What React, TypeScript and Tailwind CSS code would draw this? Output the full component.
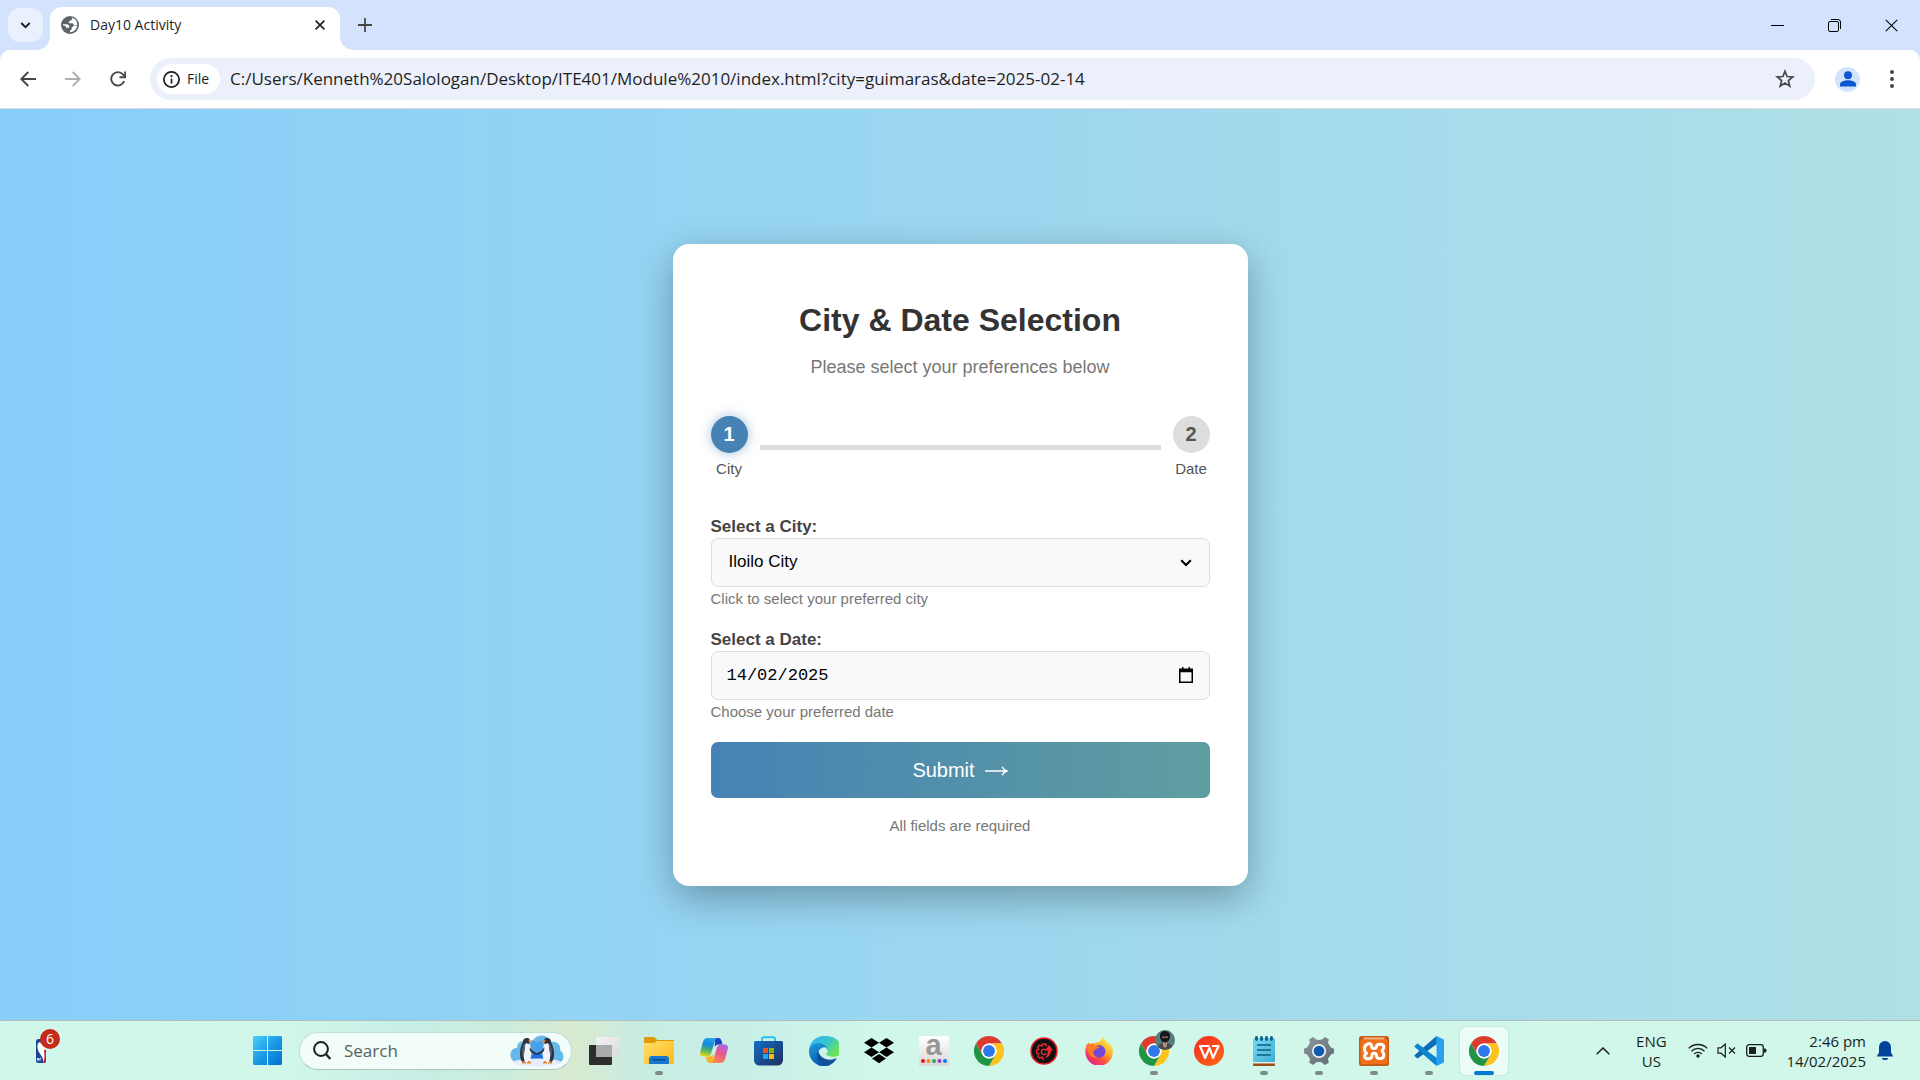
import React, { useId, useState } from "react";

type IconProps = { className?: string };

/* ---------- browser icons ---------- */

const GlobeIcon = () => (
  <svg viewBox="0 0 18 18" className="h-[18px] w-[18px] shrink-0" aria-hidden="true">
    <circle cx="9" cy="9" r="9" fill="#5f6368" />
    <path d="M11 1.800c.4 1.300-.2 2.200-1.300 2.500-.5.900-1.100 1.300-2 1.500-.1.900.2 1.400 1.100 1.500h2.400c1 .1 1.500.7 1.600 1.700h3.500A7.200 7.200 0 0 0 11 1.800z" fill="#fff" />
    <path d="M16.200 9.500h-3.700c-.2 1-.7 1.500-1.700 1.600v1.700c-.1.900-.7 1.400-1.700 1.500v1.900a7.200 7.200 0 0 0 7.100-6.700z" fill="#fff" />
    <path d="M1.900 8.200h3.900c1.500.1 2.300.9 2.400 2.300v1.200H6.500c-1.300-.1-1.900-.7-2-1.800L1.800 9.300z" fill="#fff" />
  </svg>
);

const stroke = {
  fill: "none",
  stroke: "currentColor",
  strokeLinecap: "butt" as const,
  strokeLinejoin: "miter" as const,
};

const ChevronIcon = ({ className = "" }: IconProps) => (
  <svg viewBox="0 0 12 8" className={className} aria-hidden="true">
    <path d="M1.200 1.200 6 6l4.800-4.800" {...stroke} strokeWidth="2.200" />
  </svg>
);

const CrossIcon = ({ className = "", weight = 2 }: IconProps & { weight?: number }) => (
  <svg viewBox="0 0 12 12" className={className} aria-hidden="true">
    <path d="m.7.7 10.600 10.600M11.300.7.7 11.300" {...stroke} strokeWidth={weight} />
  </svg>
);

const PlusIcon = () => (
  <svg viewBox="0 0 14 14" className="h-[14px] w-[14px]" aria-hidden="true">
    <path d="M7 0v14M0 7h14" {...stroke} strokeWidth="1.800" />
  </svg>
);

const ArrowIcon = ({ className = "" }: IconProps) => (
  <svg viewBox="0 0 16 16" className={className} aria-hidden="true">
    <path d="M16 8H1.500M8.300 1 1.300 8l7 7" {...stroke} strokeWidth="1.900" />
  </svg>
);

const ReloadIcon = () => (
  <svg viewBox="0 0 16 16" className="h-4 w-4" aria-hidden="true">
    <path d="M14.200 10.200A6.700 6.700 0 1 1 13 3.500l1.300 1.400" {...stroke} strokeWidth="1.900" />
    <path d="M15.200.5v5.700H9.500" {...stroke} strokeWidth="1.900" />
  </svg>
);

const InfoIcon = () => (
  <svg viewBox="0 0 17 17" className="h-[17px] w-[17px]" aria-hidden="true">
    <circle cx="8.500" cy="8.500" r="7.600" {...stroke} strokeWidth="1.700" />
    <path d="M8.500 7.600v5" {...stroke} strokeWidth="1.700" />
    <circle cx="8.500" cy="5.200" r="1.100" fill="currentColor" />
  </svg>
);

const StarIcon = () => (
  <svg viewBox="0 0 20 20" className="h-5 w-5" aria-hidden="true">
    <path
      d="m10 2.200 2.100 5.300 5.700.4-4.400 3.700 1.400 5.600-4.800-3.100-4.800 3.100 1.400-5.600L2.200 7.900l5.700-.4z"
      {...stroke}
      strokeWidth="1.700"
    />
  </svg>
);

/* ---------- taskbar icons ---------- */

const BasketballBadge = () => (
  <svg viewBox="0 0 26 36" className="h-9 w-[26px]" aria-hidden="true">
    <rect x="1" y="10" width="10" height="24" rx="2.500" fill="#1b4594" />
    <path d="M6 10h3a2.500 2.500 0 0 1 2 2v20a2.500 2.500 0 0 1-2 2z" fill="#c8203c" />
    <path d="M3.200 14c1.500-1.500 3.300-.6 3.600 1 1.500.3 2.600 1.500 3.200 3l1-1v3.500L9 21l.5 6-.8 7C8.300 29 6.500 27 4.500 24 2 20 2 16 3.200 14z" fill="#fff" />
    <path d="M2.500 31.500V29l1.500 2.500V29m1.200 2.500v-2.300h1" fill="none" stroke="#fff" strokeWidth=".8" />
  </svg>
);

const StartIcon = () => {
  const id = useId();
  return (
    <svg viewBox="0 0 29 29" className="h-[29px] w-[29px]" aria-hidden="true">
      <defs>
        <linearGradient id={id} gradientUnits="userSpaceOnUse" x1="0" y1="0" x2="29" y2="29">
          <stop offset="0" stopColor="#4cd0fb" />
          <stop offset=".5" stopColor="#1a9ae6" />
          <stop offset="1" stopColor="#0070d0" />
        </linearGradient>
      </defs>
      <path d="M1 0h13v14H0V1zM15 0h13l1 1v13H15zM0 15h14v14H1l-1-1zM15 15h14v13l-1 1H15z" fill={`url(#${id})`} />
    </svg>
  );
};

const SearchIcon = () => (
  <svg viewBox="0 0 18 19" className="h-[19px] w-[18px]" aria-hidden="true">
    <circle cx="8" cy="8" r="6.900" {...stroke} strokeWidth="2" />
    <path d="m12.800 12.900 4.500 5" {...stroke} strokeWidth="2.200" />
  </svg>
);

const Penguin = () => (
  <g>
    <path d="M17 3c-2.800 0-4.300 2-4.200 4.600C11.500 10 10 14 10 19c0 4 .8 6.700 2.500 8h5c2-3 3-7 2.300-12-.4-2.500-.8-4-.6-6C20.500 5.500 20 3 17 3z" fill="#2a3442" />
    <path d="M16 8c1.300.8 2.500.8 3.300.5 2.700 6 3.200 12.500-.8 18.500h-3.500c-2-5-2-13 1-19z" fill="#f1f3f6" />
    <path d="M14 8.500c-1.500 3-2.300 8-1.500 13 2-3 3-8 2.500-12z" fill="#55606e" />
    <path d="M18.500 5 23.500 6l-4.500 1.200z" fill="#f08236" />
    <path d="M19.800 12c1.300 3 3.200 4.800 7.200 6.300v1.400c-3.500-.4-6-1.800-7.200-4.700z" fill="#27313f" />
    <path d="m12 28 2-2 2 2zM17 28l2-2 2 2z" fill="#f08236" stroke="#f08236" />
  </g>
);

const PenguinsIcon = () => (
  <svg viewBox="0 0 54 32" className="h-8 w-[54px]" aria-hidden="true">
    <path d="M8 28C2 27-1 22 1 17c1-3 3-4 6-4 0-5 4-8 9-7 4 1 6 0 8-2 5-6 15-4 17 3 6-1 10 3 9 8 5 4 5 12-3 13z" fill="#67b8e8" />
    <path d="M21 22V10c0-4 3-6 6-2 3-4 6-2 6 2v12z" fill="#4aa0e6" />
    <path d="M21 24c0-4 3-6 6-6s6 2 6 6z" fill="#1f72dc" />
    <ellipse cx="27" cy="27.500" rx="24" ry="4" fill="#e4edf8" />
    <Penguin />
    <g transform="translate(54 0) scale(-1 1)">
      <Penguin />
    </g>
  </svg>
);

const TaskViewIcon = () => {
  const id = useId();
  return (
    <svg viewBox="0 0 30 28" className="h-7 w-[30px]" aria-hidden="true">
      <defs>
        <linearGradient id={id} x1="0" y1="0" x2="1" y2="1">
          <stop offset="0" stopColor="#f4f4f4" />
          <stop offset="1" stopColor="#dadada" />
        </linearGradient>
      </defs>
      <rect x="0" y="8" width="23" height="20" rx="1" fill="#2d2d2d" />
      <rect x="7" y="0" width="23" height="20" rx="1" fill={`url(#${id})`} />
      <path d="M7 8h16v12H8l-1-1z" fill="#a9abaa" />
    </svg>
  );
};

const ExplorerIcon = () => {
  const id = useId();
  return (
    <svg viewBox="0 0 30 27" className="h-[27px] w-[30px]" aria-hidden="true">
      <defs>
        <linearGradient id={id} x1="0" y1="0" x2="1" y2="1">
          <stop offset="0" stopColor="#ffdf6b" />
          <stop offset="1" stopColor="#fbb917" />
        </linearGradient>
      </defs>
      <path d="M0 1.500C0 .6.600 0 1.500 0H9.500c.7 0 1 .2 1.500.7L13.200 3H29c.6 0 1 .4 1 1v4H0z" fill="#dd9b06" />
      <path d="M0 6h9.500c.8 0 1.300-.2 1.900-.8L12.500 4H30v22a1 1 0 0 1-1 1H1a1 1 0 0 1-1-1z" fill={`url(#${id})`} />
      <path d="M5 27v-5a3 3 0 0 1 3-3h14a3 3 0 0 1 3 3v5z" fill="#1677cd" />
      <path d="M9 22.800h12" stroke="#0b4c8f" strokeWidth="1.400" strokeLinecap="round" />
    </svg>
  );
};

const CopilotIcon = () => {
  const id = useId();
  return (
    <svg viewBox="0 0 28 26" className="h-[26px] w-7" aria-hidden="true">
      <defs>
        <linearGradient id={id + "a"} x1=".5" y1="0" x2=".3" y2="1">
          <stop offset="0" stopColor="#1fa5e8" />
          <stop offset=".35" stopColor="#1587dc" />
          <stop offset=".7" stopColor="#5cb860" />
          <stop offset="1" stopColor="#f2d40c" />
        </linearGradient>
        <linearGradient id={id + "b"} x1=".8" y1="0" x2=".3" y2="1">
          <stop offset="0" stopColor="#a868f0" />
          <stop offset=".45" stopColor="#e7578f" />
          <stop offset="1" stopColor="#ff8a4a" />
        </linearGradient>
      </defs>
      <path d="M15 0h3.500c1.700 0 2.500 1.200 3 3l1 3.500h-4c-2 0-3.200 1-3.800 3z" fill="#1b45c0" />
      <path d="M13 25H9.500c-1.500 0-2.400-1-2.900-3l-1-3.500h4c2 0 3.200-1 3.800-3z" fill="#f4b32c" />
      <path d="M7.500 0H17c-1.500.8-2 2-2.500 3.800L11.200 15c-.6 2.200-1.800 3.500-4 3.500H3c-2.300 0-3.400-1.800-2.800-4.400L3 4C3.800 1.300 5.200 0 7.500 0z" fill={`url(#${id}a)`} />
      <path d="M20.500 25H11c1.500-.8 2-2 2.500-3.800L16.800 10c.6-2.200 1.800-3.500 4-3.500H25c2.300 0 3.400 1.800 2.800 4.400L25 21c-.8 2.700-2.200 4-4.500 4z" fill={`url(#${id}b)`} />
    </svg>
  );
};

const StoreIcon = () => {
  const id = useId();
  return (
    <svg viewBox="0 0 29 30" className="h-[30px] w-[29px]" aria-hidden="true">
      <defs>
        <linearGradient id={id} x1="0" y1="0" x2="1" y2="1">
          <stop offset="0" stopColor="#0f6fc6" />
          <stop offset="1" stopColor="#1f2d5c" />
        </linearGradient>
      </defs>
      <path d="M8 7V3a1.800 1.800 0 0 1 1.800-1.800h9.400A1.800 1.800 0 0 1 21 3v4" fill="none" stroke="#2cc0f2" strokeWidth="2" />
      <path d="M1.500 5h26A1.500 1.500 0 0 1 29 6.500V24a5.500 5.500 0 0 1-5.500 5.500h-18A5.500 5.500 0 0 1 0 24V6.500A1.500 1.500 0 0 1 1.500 5z" fill={`url(#${id})`} />
      <path d="M9 12h5v5H9z" fill="#f1511b" />
      <path d="M15 12h5v5h-5z" fill="#80bc06" />
      <path d="M9 18h5v5H9z" fill="#22a7ee" />
      <path d="M15 18h5v5h-5z" fill="#fbbc09" />
    </svg>
  );
};

const EdgeIcon = () => {
  const id = useId();
  return (
    <svg viewBox="0 0 256 256" className="h-[30px] w-[30px]" aria-hidden="true">
      <defs>
        <linearGradient id={id + "a"} x1=".2" y1="0" x2="1" y2=".5">
          <stop offset="0" stopColor="#35b5ee" />
          <stop offset=".5" stopColor="#36c6c9" />
          <stop offset="1" stopColor="#6ce25a" />
        </linearGradient>
        <linearGradient id={id + "b"} x1="0" y1="0" x2=".4" y2="1">
          <stop offset="0" stopColor="#1c9fe0" />
          <stop offset="1" stopColor="#0c5cae" />
        </linearGradient>
      </defs>
      <path d="M231 190c-4 2-8 4-12 5-13 5-26 7-40 7-53 0-99-36-99-83 0-13 7-25 18-31-48 2-60 52-60 81 0 82 76 91 92 91 9 0 23-3 31-5 30-11 56-32 73-59 1-4-1-7-3-6z" fill="#124f9c" />
      <path d="M106 241a79 79 0 0 1-23-21 81 81 0 0 1 30-120c3-1 8-4 15-4 10 0 19 5 25 13 4 5 6 12 6 18 0 0 27-80-65-80-57 0-94 42-94 81a128 128 0 0 0 12 56 128 128 0 0 0 156 66 75 75 0 0 1-62-9z" fill={`url(#${id}b)`} />
      <path d="M152 149c-1 1-3 2-3 7 0 3 2 7 6 10 21 15 61 13 61 13 16 0 31-4 44-12a89 89 0 0 0-4-120C232 14 190 0 128 0 57 0 1 57 0 128c1-36 36-65 80-65 4 0 24 0 43 10 17 9 26 19 32 30 6 11 8 25 8 31s-3 14-11 15z" fill={`url(#${id}a)`} transform="scale(.985)" />
    </svg>
  );
};

const DropboxIcon = () => (
  <svg viewBox="0 0 30 26" className="h-[26px] w-[30px]" aria-hidden="true">
    <path d="m7.500 0 7.500 4.800-7.500 4.700L0 4.800zM22.500 0 30 4.800l-7.500 4.700L15 4.800zM7.500 9.500l7.500 4.800L7.500 19 0 14.300zM22.500 9.500l7.500 4.800-7.500 4.700-7.500-4.700zM15 16l7 4.600-7 4.700-7-4.700z" />
  </svg>
);

const LetterTileIcon = () => (
  <span className="flex h-[30px] w-[30px] flex-col items-center justify-between bg-gradient-to-b from-white to-[#d8d8d8] pb-[3px]">
    <span className="h-[22px] font-['Liberation_Sans',sans-serif] text-[29px] leading-[18px] font-bold text-[#969696]">a</span>
    <svg viewBox="0 0 28 4" className="h-1 w-7" aria-hidden="true">
      <circle cx="3" cy="2" r="2" fill="#e81123" />
      <circle cx="8.500" cy="2" r="2" fill="#f09020" />
      <circle cx="14" cy="2" r="2" fill="#27a85a" />
      <circle cx="19.500" cy="2" r="2" fill="#8a3fd1" />
      <circle cx="25" cy="2" r="2" fill="#0a7bdc" />
    </svg>
  </span>
);

const ChromeIcon = () => (
  <svg viewBox="0 0 48 48" className="h-[30px] w-[30px]" aria-hidden="true">
    <circle cx="24" cy="24" r="23" fill="#fff" />
    <path d="M3.215 12A24 24 0 0 1 44.785 12H24a12 12 0 0 0-10.390 18z" fill="#dd3b30" />
    <path d="M44.785 12A24 24 0 0 1 24 48l10.390-18A12 12 0 0 0 24 12z" fill="#fcc31e" />
    <path d="M24 48A24 24 0 0 1 3.215 12l10.395 18a12 12 0 0 0 20.780 0z" fill="#219547" />
    <circle cx="24" cy="24" r="12" fill="#fff" />
    <circle cx="24" cy="24" r="9.500" fill="#2f78ec" />
  </svg>
);

const GearBoltIcon = () => (
  <svg viewBox="0 0 28 28" className="h-7 w-7" aria-hidden="true">
    <circle cx="14" cy="14" r="13" fill="#101214" stroke="#ee1f2a" strokeWidth="1.600" />
    <path d="M16.500 9.500 15.800 7h-3.200L12 9.200l-2.300-1.100-2.100 2.100 1.200 2.200-2.300.7v3l2.300.6-1.100 2.300 2.200 2.100 2.200-1.200.6 2.100h1.500" {...stroke} stroke="#f02a30" strokeWidth="1.300" />
    <path d="M16 13a2.700 2.700 0 1 0 .2 3.400" {...stroke} stroke="#f02a30" strokeWidth="1.300" />
    <path d="m19 8 4.200 5.500h-2.300c0 4-2.200 6.800-5.700 7.500 2-2 2.600-4.200 2.500-7.500H15z" fill="#f02a30" />
  </svg>
);

const FirefoxIcon = () => {
  const id = useId();
  return (
    <svg viewBox="0 0 28 28" className="h-7 w-7" aria-hidden="true">
      <defs>
        <linearGradient id={id} x1=".9" y1=".1" x2=".2" y2="1">
          <stop offset="0" stopColor="#fff04a" />
          <stop offset=".35" stopColor="#ffb02a" />
          <stop offset=".65" stopColor="#ff4f3c" />
          <stop offset="1" stopColor="#e0189c" />
        </linearGradient>
      </defs>
      <path d="M18 0c1 2.500 3.200 3.600 4.600 5.400.6.800 1 1.500 1.200 2.200.5-.3.600-1 .5-1.700 2.500 2.500 3.700 6 3.500 9.500A13.700 13.700 0 0 1 .4 14.700C.3 11 1.500 7.500 4 5.200c0 .9.200 1.600.7 2.200C6 6 8 5.900 9.500 6.500 11 5.500 12.300 5 14 5c1.500-1.300 3-3 4-5z" fill={`url(#${id})`} />
      <circle cx="14.200" cy="14.400" r="6.300" fill="#7448d8" />
      <path d="M1.500 8c3-1.500 7-.7 9.500 1.200 1.700-.2 3.300.1 4.500 1-1.700.3-3 1.200-4.500 1.800-1.200.5-1.500 2-3 2.400.3 3 2 5.500 5 6C7 22 2 18 1.500 8z" fill="#ff7a22" />
    </svg>
  );
};

const PortraitBadge = () => (
  <svg viewBox="0 0 20 20" className="absolute -top-1.5 left-4 h-5 w-5" aria-hidden="true">
    <circle cx="10" cy="10" r="10" fill="#557f7c" />
    <path d="M3 17c1-3 3-4 7-4s6 1 7 4a10 10 0 0 1-14 0z" fill="#4a4a4e" />
    <path d="M8 11h4v5l-2 2-2-2z" fill="#b98e7c" />
    <path d="M5 7.500C4.500 3 7 1 10 1s5.500 2 5 6c-.5 3.500-2.500 5.500-5 5.500s-4.500-2-5-5z" fill="#19181a" />
    <path d="M7 6.500h6V8H7z" fill="#8d6a5c" />
  </svg>
);

const WpsIcon = () => {
  const id = useId();
  return (
    <svg viewBox="0 0 30 30" className="h-[30px] w-[30px]" aria-hidden="true">
      <defs>
        <linearGradient id={id} x1="0" y1="0" x2="1" y2="1">
          <stop offset="0" stopColor="#f52a22" />
          <stop offset="1" stopColor="#ff6a14" />
        </linearGradient>
      </defs>
      <circle cx="15" cy="15" r="15" fill={`url(#${id})`} />
      <path d="M15.500 10H6l5 12L15.500 12l3.500 10 5.500-12h-6.500" fill="none" stroke="#fff" strokeWidth="2.200" strokeLinejoin="round" />
    </svg>
  );
};

const NotepadIcon = () => {
  const id = useId();
  return (
    <svg viewBox="0 0 22 30" className="h-[30px] w-[22px]" aria-hidden="true">
      <defs>
        <linearGradient id={id} x1="0" y1="0" x2="1" y2="1">
          <stop offset="0" stopColor="#7bd9f2" />
          <stop offset="1" stopColor="#3fafd4" />
        </linearGradient>
      </defs>
      <path d="M0 26h22v3a1 1 0 0 1-1 1H1a1 1 0 0 1-1-1z" fill="#964f14" />
      <path d="M0 25h22v2.500H0z" fill="#e8e8e8" />
      <rect y="2" width="22" height="24" rx="1.500" fill={`url(#${id})`} />
      <path d="M4 9h14M4 14h14M4 19h14" stroke="#0d6084" strokeWidth="1.700" />
      <path d="M3.500 1.500v2M8.500 1.500v2M13.500 1.500v2M18.500 1.500v2" stroke="#0d6084" strokeWidth="2.800" strokeLinecap="round" />
    </svg>
  );
};

const SettingsIcon = () => {
  const id = useId();
  return (
    <svg viewBox="0 0 30 30" className="h-[30px] w-[30px]" aria-hidden="true">
      <defs>
        <linearGradient id={id} x1="0" y1="0" x2="1" y2="1">
          <stop offset="0" stopColor="#8d949c" />
          <stop offset="1" stopColor="#626a74" />
        </linearGradient>
      </defs>
      <path
        d="M9.200 1 12 3.600c2 .6 4 .6 6 0L20.800 1l4 2.300-.8 3.800c1 1.600 1.700 2.700 3 4.400l3 1.200v4.600l-3 1.200c-1.300 1.700-2 2.800-3 4.400l.8 3.800-4 2.300-2.800-2.600c-2-.6-4-.6-6 0L9.200 29l-4-2.300.8-3.800c-1-1.600-1.700-2.700-3-4.400l-3-1.200v-4.600l3-1.200c1.300-1.700 2-2.800 3-4.400l-.8-3.800z"
        fill={`url(#${id})`}
      />
      <circle cx="15" cy="15" r="7" fill="#f2f3f4" />
      <circle cx="15" cy="15" r="5.300" fill="#0d5cb2" />
    </svg>
  );
};

const XamppIcon = () => (
  <svg viewBox="0 0 30 30" className="h-[30px] w-[30px]" aria-hidden="true">
    <rect width="30" height="30" rx="2.500" fill="#c65c1a" />
    <rect x="1.500" y="3" width="27" height="25" rx="2" fill="#f0701c" />
    <path d="M4 1.200h22l-1.500 2.300h-19z" fill="#f0a878" />
    <path
      d="M8 8.500a2.500 2.500 0 0 1 4.500 1.800c0 1.500.5 2.200 2.500 2.200s2.500-.7 2.500-2.200c0-3 7.300-3 7.300.7 0 1.700-.8 2.700-1.800 3.700 1 1.200 1.800 2.300 1.800 4.300 0 4.700-7.300 4.700-7.300.8 0-1.800-.5-2.500-2.500-2.500s-2 .9-2 2.300c0 4.500-7.500 4-7.500.5 0-1.500.8-2 2-2.700-1.200-1.200-2-2.300-2-4.200 0-2.500 1-4.300 2.500-4.700z"
      fill="none"
      stroke="#fff"
      strokeWidth="3"
      strokeLinejoin="round"
    />
  </svg>
);

const VsCodeIcon = () => (
  <svg viewBox="0 0 30 30" className="h-[30px] w-[30px]" aria-hidden="true">
    <path d="M22.500 0 1 18.800c-.6.600-.6 1.200 0 1.800l1.800 1.500c.5.400 1 .4 1.500 0L24 7.500z" fill="#0b6db5" />
    <path d="M22.500 30 1 11.200c-.6-.6-.6-1.200 0-1.800l1.800-1.500c.5-.4 1-.4 1.500 0L24 22.500z" fill="#0d86cf" />
    <path d="M22.300 0 29 3.100c.6.3 1 .9 1 1.600v20.600c0 .7-.4 1.300-1 1.600L22.300 30z" fill="#27a0ee" />
    <path d="M22.300 8.500v13L13.500 15z" fill="#d2f6ea" />
  </svg>
);

const WifiIcon = () => (
  <svg viewBox="0 0 20 15" className="h-[15px] w-5" aria-hidden="true">
    <path d="M.7 5.400a13 13 0 0 1 18.600 0M3.500 8.200a9 9 0 0 1 13 0M6.200 11a5.300 5.300 0 0 1 7.600 0" {...stroke} strokeWidth="1.300" />
    <circle cx="10" cy="13" r="1.700" fill="currentColor" />
  </svg>
);

const MutedIcon = () => (
  <svg viewBox="0 0 20 15" className="h-[15px] w-5" aria-hidden="true">
    <path d="M1 4.800h3L8.300 1v13L4 10.200H1z" {...stroke} strokeWidth="1.200" />
    <path d="m12 4.500 6 6m0-6-6 6" {...stroke} strokeWidth="1.200" />
  </svg>
);

const BatteryIcon = () => (
  <svg viewBox="0 0 21 13" className="h-[13px] w-[21px]" aria-hidden="true">
    <rect x=".7" y=".7" width="16.600" height="11.600" rx="2.500" {...stroke} strokeWidth="1.300" />
    <rect x="3" y="3" width="7" height="7" rx=".5" fill="currentColor" />
    <path d="M18 4.500h1a1.500 1.500 0 0 1 1.500 1.500v1A1.500 1.500 0 0 1 19 8.500h-1z" fill="currentColor" />
  </svg>
);

const BellIcon = () => (
  <svg viewBox="0 0 16 19" className="h-[19px] w-4" aria-hidden="true">
    <path d="M8 0a6 6 0 0 1 6 6v5.500l2 3.500v.5H0V15l2-3.500V6a6 6 0 0 1 6-6zM5 17h6a3 2 0 0 1-6 0z" fill="#02429b" />
  </svg>
);

/* ---------- browser chrome ---------- */

const TabStrip = () => (
  <header className="flex h-[50px] items-center bg-[#d3e3fd] pl-2">
    <button type="button" aria-label="Search tabs" className="flex h-[34px] w-[35px] items-center justify-center rounded-xl bg-[#e9f1fe] text-[#1f1f1f]">
      <ChevronIcon className="h-[7px] w-[11px]" />
    </button>
    <div className="relative ml-[7px] flex h-[43px] w-[290px] items-center self-end rounded-t-xl bg-white pr-[15px] pb-[7px] pl-[11px]">
      <span className="absolute bottom-0 -left-3 h-3 w-3 bg-[radial-gradient(circle_at_0_0,transparent_11px,white_12px)]" />
      <span className="absolute -right-3 bottom-0 h-3 w-3 bg-[radial-gradient(circle_at_100%_0,transparent_11px,white_12px)]" />
      <GlobeIcon />
      <span className="ml-[11px] flex-1 text-sm text-[#1f1f1f]">Day10 Activity</span>
      <button type="button" aria-label="Close tab" className="text-[#1f1f1f]">
        <CrossIcon className="h-[10px] w-[10px]" />
      </button>
    </div>
    <button type="button" aria-label="New tab" className="ml-[18px] text-[#474747]">
      <PlusIcon />
    </button>
    <div className="ml-auto flex text-black">
      <button type="button" aria-label="Minimize" className="flex h-12 w-[57px] items-center justify-center">
        <span className="h-px w-[13px] bg-black" />
      </button>
      <button type="button" aria-label="Restore" className="flex h-12 w-[57px] items-center justify-center">
        <svg viewBox="0 0 13 13" className="h-[13px] w-[13px]" aria-hidden="true">
          <rect x=".5" y="2.500" width="10" height="10" rx="1.500" {...stroke} />
          <path d="M3 .5h7A2.500 2.500 0 0 1 12.500 3v7" {...stroke} />
        </svg>
      </button>
      <button type="button" aria-label="Close" className="flex h-12 w-[57px] items-center justify-center">
        <CrossIcon className="h-[13px] w-[13px]" weight={1} />
      </button>
    </div>
  </header>
);

const Toolbar = () => (
  <div className="bg-[#d3e3fd]">
    <nav className="flex h-[59px] items-center rounded-t-[10px] border-b border-[#d9dde3] bg-white pl-[5px]">
      <button type="button" aria-label="Back" className="flex w-[45px] justify-center text-[#474747]">
        <ArrowIcon className="h-4 w-4" />
      </button>
      <button type="button" aria-label="Forward" disabled className="flex w-[45px] justify-center text-[#b0b0b0]">
        <ArrowIcon className="h-4 w-4 rotate-180" />
      </button>
      <button type="button" aria-label="Reload" className="flex w-[45px] justify-center text-[#474747]">
        <ReloadIcon />
      </button>
      <div className="ml-[10px] flex h-[42px] flex-1 items-center rounded-full bg-[#ebf0fa] pr-5 pl-[7px]">
        <button type="button" className="flex h-[30px] w-[63px] items-center gap-[7px] rounded-full bg-white pl-[6px] text-sm text-[#1f1f1f]">
          <InfoIcon />
          File
        </button>
        <input
          aria-label="Address"
          readOnly
          value="C:/Users/Kenneth%20Salologan/Desktop/ITE401/Module%2010/index.html?city=guimaras&date=2025-02-14"
          className="ml-[10px] min-w-0 flex-1 bg-transparent text-[17px] text-[#1f1f1f] outline-none"
        />
        <button type="button" aria-label="Bookmark this tab" className="text-[#474747]">
          <StarIcon />
        </button>
      </div>
      <button type="button" aria-label="Profile" className="ml-5 flex h-[25px] w-[25px] items-center justify-center rounded-full bg-[#d3e3fd]">
        <svg viewBox="0 0 16 16" className="h-4 w-4" aria-hidden="true">
          <circle cx="8" cy="4.300" r="4" fill="#0b57d0" />
          <path d="M0 15.500v-2.300C0 10.500 5 9.300 8 9.300s8 1.200 8 3.900v2.300z" fill="#0b57d0" />
        </svg>
      </button>
      <button type="button" aria-label="Browser menu" className="mr-[6px] ml-[10px] flex w-11 justify-center text-[#474747]">
        <svg viewBox="0 0 4 18" className="h-[18px] w-1" aria-hidden="true">
          <circle cx="2" cy="2" r="2" fill="currentColor" />
          <circle cx="2" cy="9" r="2" fill="currentColor" />
          <circle cx="2" cy="16" r="2" fill="currentColor" />
        </svg>
      </button>
    </nav>
  </div>
);

/* ---------- form ---------- */

const Step = ({ number, label, active = false }: { number: number; label: string; active?: boolean }) => (
  <li className="flex flex-col items-center gap-[6px] text-[15px] leading-5 text-[#555]">
    <span
      className={
        active
          ? "flex h-[37px] w-[37px] items-center justify-center rounded-full bg-[#4682b4] text-xl font-bold text-white shadow-[0_0_12px_rgba(70,130,180,0.5)]"
          : "flex h-[37px] w-[37px] items-center justify-center rounded-full bg-[#ddd] text-xl font-bold text-[#555]"
      }
    >
      {number}
    </span>
    {label}
  </li>
);

const fieldClass =
  "h-[49px] w-full appearance-none rounded-[7px] border border-[#ddd] bg-[#f9f9f9] text-[17px] text-black outline-none";

const SelectionForm = () => {
  const [city, setCity] = useState("iloilo");
  const [date, setDate] = useState("14/02/2025");
  return (
    <form
      onSubmit={(e) => e.preventDefault()}
      className="w-[575px] rounded-2xl bg-white px-[38px] pt-14 pb-[50px] font-['Liberation_Sans',Arial,sans-serif] shadow-[0_12px_38px_rgba(0,0,0,0.3)]"
    >
      <h1 className="text-center text-[32px] leading-10 font-bold text-[#333]">City &amp; Date Selection</h1>
      <p className="mt-[15px] text-center text-lg leading-6 text-[#777]">Please select your preferences below</p>

      <ol className="mt-[37px] flex items-center">
        <Step number={1} label="City" active />
        <li aria-hidden="true" className="mx-3 h-[5px] flex-1 bg-[#ddd]" />
        <Step number={2} label="Date" />
      </ol>

      <label htmlFor="city" className="mt-[37px] block text-[17px] leading-[22px] font-bold text-[#444]">
        Select a City:
      </label>
      <div className="relative">
        <select id="city" value={city} onChange={(e) => setCity(e.target.value)} className={`${fieldClass} pr-10 pl-[17px]`}>
          <option value="iloilo">Iloilo City</option>
          <option value="guimaras">Guimaras</option>
        </select>
        <ChevronIcon className="pointer-events-none absolute top-[21px] right-[18px] h-2 w-3 text-black" />
      </div>
      <p className="mt-px text-[15px] leading-[22px] text-[#777]">Click to select your preferred city</p>

      <label htmlFor="date" className="mt-[19px] block text-[17px] leading-[22px] font-bold text-[#444]">
        Select a Date:
      </label>
      <div className="relative">
        <input
          id="date"
          type="text"
          value={date}
          onChange={(e) => setDate(e.target.value)}
          className={`${fieldClass} pr-10 pl-[15px] font-['Liberation_Mono',monospace]`}
        />
        <button type="button" aria-label="Open calendar" className="absolute top-4 right-[17px]">
          <svg viewBox="0 0 14 16" className="h-4 w-[14px]" aria-hidden="true">
            <path d="M3 0h1.500v1.500h5V0H11v1.500h3V16H0V1.500h3zM1.500 5.200v9.300h11V5.200z" fillRule="evenodd" />
          </svg>
        </button>
      </div>
      <p className="mt-px text-[15px] leading-[22px] text-[#777]">Choose your preferred date</p>

      <button
        type="submit"
        className="mt-[19px] flex h-14 w-full items-center justify-center gap-[10px] rounded-[7px] bg-[linear-gradient(to_right,#4682b4,#5f9ea0)] text-xl text-white"
      >
        Submit
        <svg viewBox="0 0 23 10" className="mt-[3px] h-[10px] w-[23px]" aria-hidden="true">
          <path d="M0 5h22M17 .8c1 2 2.500 3.400 5 4.200-2.500.8-4 2.200-5 4.200" {...stroke} strokeWidth="1.400" />
        </svg>
      </button>
      <p className="mt-[18px] text-center text-[15px] leading-5 text-[#777]">All fields are required</p>
    </form>
  );
};

/* ---------- taskbar ---------- */

type TaskbarApp = { name: string; icon: React.ReactNode; state?: "open" | "active" };

const apps: TaskbarApp[] = [
  { name: "Task view", icon: <TaskViewIcon /> },
  { name: "File Explorer", icon: <ExplorerIcon />, state: "open" },
  { name: "Copilot", icon: <CopilotIcon /> },
  { name: "Microsoft Store", icon: <StoreIcon /> },
  { name: "Edge", icon: <EdgeIcon /> },
  { name: "Dropbox", icon: <DropboxIcon /> },
  { name: "Letter tile", icon: <LetterTileIcon /> },
  { name: "Chrome", icon: <ChromeIcon /> },
  { name: "Game tool", icon: <GearBoltIcon /> },
  { name: "Firefox", icon: <FirefoxIcon /> },
  {
    name: "Chrome profile",
    icon: (
      <span className="relative">
        <ChromeIcon />
        <PortraitBadge />
      </span>
    ),
    state: "open",
  },
  { name: "WPS Office", icon: <WpsIcon /> },
  { name: "Notepad", icon: <NotepadIcon />, state: "open" },
  { name: "Settings", icon: <SettingsIcon />, state: "open" },
  { name: "XAMPP", icon: <XamppIcon />, state: "open" },
  { name: "Visual Studio Code", icon: <VsCodeIcon />, state: "open" },
  { name: "Chrome window", icon: <ChromeIcon />, state: "active" },
];

const AppButton = ({ name, icon, state }: TaskbarApp) => (
  <div className="flex w-[55px] justify-center">
    <button
      type="button"
      aria-label={name}
      className={
        state === "active"
          ? "relative flex h-12 w-12 items-center justify-center rounded-md bg-white/60 shadow-[0_0_1px_1px_rgba(0,0,0,0.06)]"
          : "relative flex h-12 w-12 items-center justify-center rounded-md"
      }
    >
      {icon}
      {state === "open" && <span className="absolute bottom-0 h-1 w-2 rounded-full bg-[#7b8d86]" />}
      {state === "active" && <span className="absolute bottom-0 h-1 w-5 rounded-full bg-[#0078d4]" />}
    </button>
  </div>
);

const Taskbar = () => (
  <footer className="flex h-[60px] items-center border-t border-[#b0bdb8] bg-[linear-gradient(to_right,#d0f7ea_0px,#d0f7ea_280px,#c6eee5_420px,#cdecd9_520px,#d8ead0_575px,#c8ece2_640px,#c8efe6_740px,#d0f7ea_880px)]">
    <div className="flex w-[239px] pl-[35px]">
      <button type="button" aria-label="Widgets" className="relative -mt-2">
        <BasketballBadge />
        <span className="absolute top-0 left-[5px] flex h-5 w-5 items-center justify-center rounded-full bg-[#c42b1c] text-sm text-white">
          6
        </span>
      </button>
    </div>
    <div className="flex items-center">
      <div className="flex w-[60px] pl-[14px]">
        <button type="button" aria-label="Start">
          <StartIcon />
        </button>
      </div>
      <label className="mr-1 flex h-[38px] w-[273px] items-center rounded-full border border-b-[#a9c4bb] border-[#c0ded5] bg-[#f2fcf8] pr-[7px] pl-[13px] text-[#1f1f1f]">
        <SearchIcon />
        <input aria-label="Search" placeholder="Search" className="ml-[13px] min-w-0 flex-1 bg-transparent text-[17px] outline-none placeholder:text-[#56635f]" />
        <PenguinsIcon />
      </label>
      {apps.map((app) => (
        <AppButton key={app.name} {...app} />
      ))}
    </div>
    <div className="ml-auto flex items-center pr-[27px] text-[15px] leading-5 text-[#1a1f1d]">
      <button type="button" aria-label="Show hidden icons">
        <svg viewBox="0 0 14 8" className="h-2 w-[14px]" aria-hidden="true">
          <path d="M.7 7.200 7 1l6.300 6.200" {...stroke} strokeWidth="1.500" />
        </svg>
      </button>
      <button type="button" className="ml-[18px] w-[46px] text-center">
        ENG
        <br />
        US
      </button>
      <button type="button" aria-label="Network, volume and battery" className="ml-[14px] flex items-center gap-[9px]">
        <WifiIcon />
        <MutedIcon />
        <BatteryIcon />
      </button>
      <button type="button" className="ml-[19px] text-right">
        2:46 pm
        <br />
        14/02/2025
      </button>
      <button type="button" aria-label="Notifications" className="ml-[11px]">
        <BellIcon />
      </button>
    </div>
  </footer>
);

export default function App() {
  return (
    <div className="flex min-h-screen flex-col font-['Open_Sans','Noto_Sans',sans-serif]">
      <TabStrip />
      <Toolbar />
      <main className="flex flex-1 items-center justify-center bg-[linear-gradient(to_right,#87cefa,#b0e0e6)]">
        <SelectionForm />
      </main>
      <Taskbar />
    </div>
  );
}
